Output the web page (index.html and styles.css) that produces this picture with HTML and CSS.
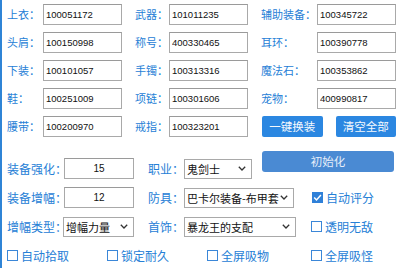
FILE: index.html
```html
<!DOCTYPE html>
<html lang="zh-CN">
<head>
<meta charset="utf-8">
<title>装备</title>
<link rel="stylesheet" href="styles.css">
</head>
<body>
<div class="frame">
  <div class="equip">
    <span class="lbl">上衣：</span><input class="num" type="text" value="100051172">
    <span class="lbl gap">武器：</span><input class="num" type="text" value="101011235">
    <span class="lbl gap">辅助装备：</span><input class="num" type="text" value="100345722">

    <span class="lbl">头肩：</span><input class="num" type="text" value="100150998">
    <span class="lbl gap">称号：</span><input class="num" type="text" value="400330465">
    <span class="lbl gap">耳环：</span><input class="num" type="text" value="100390778">

    <span class="lbl">下装：</span><input class="num" type="text" value="100101057">
    <span class="lbl gap">手镯：</span><input class="num" type="text" value="100313316">
    <span class="lbl gap">魔法石：</span><input class="num" type="text" value="100353862">

    <span class="lbl">鞋：</span><input class="num" type="text" value="100251009">
    <span class="lbl gap">项链：</span><input class="num" type="text" value="100301606">
    <span class="lbl gap">宠物：</span><input class="num" type="text" value="400990817">

    <span class="lbl">腰带：</span><input class="num" type="text" value="100200970">
    <span class="lbl gap">戒指：</span><input class="num" type="text" value="100323201">
    <div class="btns">
      <button class="btn">一键换装</button>
      <button class="btn">清空全部</button>
    </div>
  </div>

  <div class="opts">
    <span class="lbl2">装备强化：</span><input class="num center" type="text" value="15">
    <span class="lbl2 gap2">职业：</span>
    <div class="sel w68"><span>鬼剑士</span><svg class="chev" width="8" height="5" viewBox="0 0 8 5"><path d="M0.8 0.8 L4 4 L7.2 0.8" fill="none" stroke="#333" stroke-width="1.3"/></svg></div>
    <button class="btn init">初始化</button>

    <span class="lbl2">装备增幅：</span><input class="num center" type="text" value="12">
    <span class="lbl2 gap2">防具：</span>
    <div class="sel wide w110"><span>巴卡尔装备-布甲套</span><svg class="chev" width="8" height="5" viewBox="0 0 8 5"><path d="M0.8 0.8 L4 4 L7.2 0.8" fill="none" stroke="#333" stroke-width="1.3"/></svg></div>
    <label class="chk right"><svg class="box" width="11" height="11" viewBox="0 0 11 11"><rect x="0" y="0" width="11" height="11" fill="#2f80d8"/><path d="M2.2 5.6 L4.5 8 L8.9 3" fill="none" stroke="#fff" stroke-width="1.5"/></svg><span>自动评分</span></label>

    <span class="lbl2">增幅类型：</span>
    <div class="sel w71"><span>增幅力量</span><svg class="chev" width="8" height="5" viewBox="0 0 8 5"><path d="M0.8 0.8 L4 4 L7.2 0.8" fill="none" stroke="#333" stroke-width="1.3"/></svg></div>
    <span class="lbl2 gap2">首饰：</span>
    <div class="sel wide w112"><span>暴龙王的支配</span><svg class="chev" width="8" height="5" viewBox="0 0 8 5"><path d="M0.8 0.8 L4 4 L7.2 0.8" fill="none" stroke="#333" stroke-width="1.3"/></svg></div>
    <label class="chk right r2"><span class="box empty"></span><span>透明无敌</span></label>

    <div class="chkrow">
      <label class="chk"><span class="box empty"></span><span>自动拾取</span></label>
      <label class="chk"><span class="box empty"></span><span>锁定耐久</span></label>
      <label class="chk"><span class="box empty"></span><span>全屏吸物</span></label>
      <label class="chk"><span class="box empty"></span><span>全屏吸怪</span></label>
    </div>
  </div>
</div>
</body>
</html>
```

FILE: styles.css
```css
html, body {
  margin: 0;
  padding: 0;
  background: #ffffff;
}

body {
  width: 400px;
  height: 268px;
  overflow: hidden;
  font-family: "Noto Sans CJK SC", "Liberation Sans", sans-serif;
}

.frame {
  height: 268px;
  box-sizing: border-box;
  border-left: 2px solid #2f84d6;
  padding-left: 5px;
  padding-top: 4px;
}

.equip {
  display: grid;
  grid-template-columns: 36px 79px 47px 79px 69px 79px;
  grid-auto-rows: 21px;
  row-gap: 7px;
  align-items: center;
}

.lbl {
  font-size: 11px;
  color: #2680d6;
  white-space: nowrap;
  line-height: 21px;
}

.lbl.gap {
  padding-left: 13px;
}

.num {
  box-sizing: border-box;
  width: 100%;
  height: 21px;
  margin: 0;
  border: 1px solid #a9a9a9;
  border-top-color: #9a9a9a;
  padding: 0 0 0 2px;
  font-family: "Liberation Sans", "Noto Sans CJK SC", sans-serif;
  font-size: 9.5px;
  color: #111;
  background: #fff;
  outline: none;
}

.num.center {
  text-align: center;
  padding: 0;
  font-size: 10px;
}

.btns {
  grid-column: 5 / span 2;
  display: flex;
  gap: 13px;
  padding-left: 14px;
  height: 21px;
}

.btn {
  box-sizing: border-box;
  width: 61px;
  height: 21px;
  margin: 0;
  padding: 0;
  border: none;
  border-radius: 2px;
  background: #2b87e1;
  color: #f4f8fd;
  font-family: "Noto Sans CJK SC", sans-serif;
  font-size: 11.5px;
  line-height: 21px;
}

.opts {
  margin-top: 21px;
  display: grid;
  grid-template-columns: 57px 70px 50px 78px 34px 100px;
  grid-auto-rows: 21px;
  row-gap: 8px;
  align-items: center;
}

.lbl2 {
  font-size: 12px;
  color: #2680d6;
  white-space: nowrap;
  line-height: 21px;
}

.lbl2.gap2 {
  padding-left: 14px;
}

.btn.init {
  grid-column: 5 / span 2;
  width: 132px;
  align-self: start;
  margin-top: -7px;
  border-radius: 3px;
  background: #4a8ad3;
  color: #e6eef9;
  font-size: 11.5px;
}

.sel {
  box-sizing: border-box;
  height: 20px;
  border: 1px solid #a9a9a9;
  background: #fff;
  display: flex;
  align-items: center;
  justify-content: space-between;
  padding: 0 5px 0 2px;
  font-size: 11px;
  color: #111;
  white-space: nowrap;
  overflow: hidden;
}

.sel.w68 { width: 68px; }
.sel.w71 { width: 71px; margin-left: -1px; }
.sel.wide { grid-column: 4 / span 2; }
.sel.w110 { width: 110px; }
.sel.w112 { width: 112px; }

.chev {
  flex: none;
  display: block;
}

.chk {
  display: flex;
  align-items: center;
  gap: 3px;
  font-size: 12px;
  color: #2680d6;
  white-space: nowrap;
}

.chk.right {
  padding-left: 16px;
}

.chk.right.r2 {
  padding-left: 15px;
}

.box {
  flex: none;
  display: block;
  width: 11px;
  height: 11px;
}

.box.empty {
  box-sizing: border-box;
  border: 1px solid #3b87d8;
  background: #fff;
}

.chkrow {
  grid-column: 1 / -1;
  display: grid;
  grid-template-columns: 100px 100px 104px auto;
  align-items: center;
}
```
